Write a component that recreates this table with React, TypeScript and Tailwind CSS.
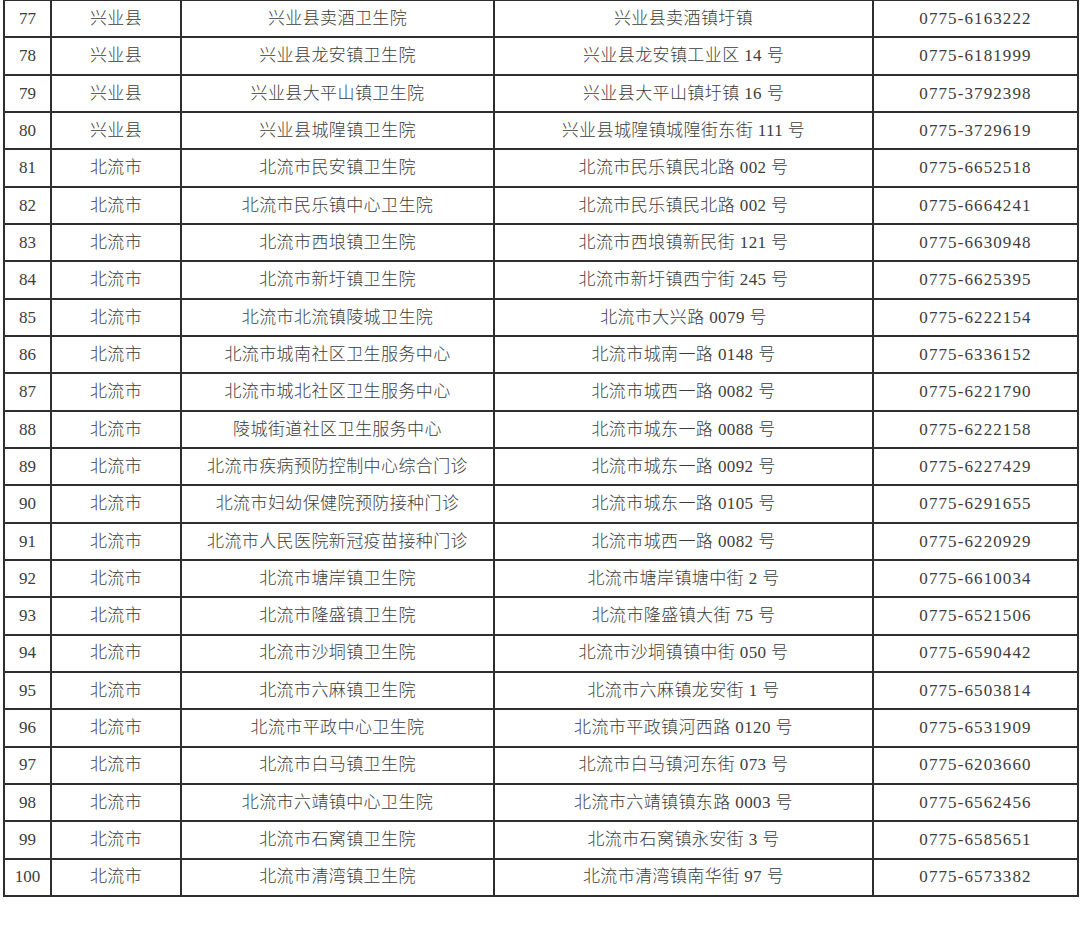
import React from "react";

const rows: [string, string, string, string, string][] = [
  ["77", "兴业县", "兴业县卖酒卫生院", "兴业县卖酒镇圩镇", "0775-6163222"],
  ["78", "兴业县", "兴业县龙安镇卫生院", "兴业县龙安镇工业区 14 号", "0775-6181999"],
  ["79", "兴业县", "兴业县大平山镇卫生院", "兴业县大平山镇圩镇 16 号", "0775-3792398"],
  ["80", "兴业县", "兴业县城隍镇卫生院", "兴业县城隍镇城隍街东街 111 号", "0775-3729619"],
  ["81", "北流市", "北流市民安镇卫生院", "北流市民乐镇民北路 002 号", "0775-6652518"],
  ["82", "北流市", "北流市民乐镇中心卫生院", "北流市民乐镇民北路 002 号", "0775-6664241"],
  ["83", "北流市", "北流市西埌镇卫生院", "北流市西埌镇新民街 121 号", "0775-6630948"],
  ["84", "北流市", "北流市新圩镇卫生院", "北流市新圩镇西宁街 245 号", "0775-6625395"],
  ["85", "北流市", "北流市北流镇陵城卫生院", "北流市大兴路 0079 号", "0775-6222154"],
  ["86", "北流市", "北流市城南社区卫生服务中心", "北流市城南一路 0148 号", "0775-6336152"],
  ["87", "北流市", "北流市城北社区卫生服务中心", "北流市城西一路 0082 号", "0775-6221790"],
  ["88", "北流市", "陵城街道社区卫生服务中心", "北流市城东一路 0088 号", "0775-6222158"],
  ["89", "北流市", "北流市疾病预防控制中心综合门诊", "北流市城东一路 0092 号", "0775-6227429"],
  ["90", "北流市", "北流市妇幼保健院预防接种门诊", "北流市城东一路 0105 号", "0775-6291655"],
  ["91", "北流市", "北流市人民医院新冠疫苗接种门诊", "北流市城西一路 0082 号", "0775-6220929"],
  ["92", "北流市", "北流市塘岸镇卫生院", "北流市塘岸镇塘中街 2 号", "0775-6610034"],
  ["93", "北流市", "北流市隆盛镇卫生院", "北流市隆盛镇大街 75 号", "0775-6521506"],
  ["94", "北流市", "北流市沙垌镇卫生院", "北流市沙垌镇镇中街 050 号", "0775-6590442"],
  ["95", "北流市", "北流市六麻镇卫生院", "北流市六麻镇龙安街 1 号", "0775-6503814"],
  ["96", "北流市", "北流市平政中心卫生院", "北流市平政镇河西路 0120 号", "0775-6531909"],
  ["97", "北流市", "北流市白马镇卫生院", "北流市白马镇河东街 073 号", "0775-6203660"],
  ["98", "北流市", "北流市六靖镇中心卫生院", "北流市六靖镇镇东路 0003 号", "0775-6562456"],
  ["99", "北流市", "北流市石窝镇卫生院", "北流市石窝镇永安街 3 号", "0775-6585651"],
  ["100", "北流市", "北流市清湾镇卫生院", "北流市清湾镇南华街 97 号", "0775-6573382"],
];

export default function App() {
  return (
    <div className="w-[1080px] h-[929px] bg-white overflow-hidden">
      <div
        className="mt-[-1px] ml-[3px] w-[1076px] border-t-2 border-l-2 border-[#2e2e2e] text-[#3c3c3c] text-[17px] font-light"
        style={{ fontFamily: '"Liberation Serif", "Noto Sans CJK SC", serif' }}
      >
        {rows.map((r) => (
          <div key={r[0]} className="flex h-[37.33px] border-b-2 border-[#2e2e2e]">
            <div className="w-[47px] shrink-0 flex items-center justify-center border-r-2 border-[#2e2e2e]">{r[0]}</div>
            <div className="w-[130px] shrink-0 flex items-center justify-center border-r-2 border-[#2e2e2e] tracking-[0.4px]">{r[1]}</div>
            <div className="w-[313px] shrink-0 flex items-center justify-center border-r-2 border-[#2e2e2e] tracking-[0.4px]">{r[2]}</div>
            <div className="w-[379px] shrink-0 flex items-center justify-center border-r-2 border-[#2e2e2e] tracking-[0.4px]">{r[3]}</div>
            <div className="flex-1 flex items-center justify-center border-r-2 border-[#2e2e2e] tracking-[1.1px]">{r[4]}</div>
          </div>
        ))}
      </div>
    </div>
  );
}
